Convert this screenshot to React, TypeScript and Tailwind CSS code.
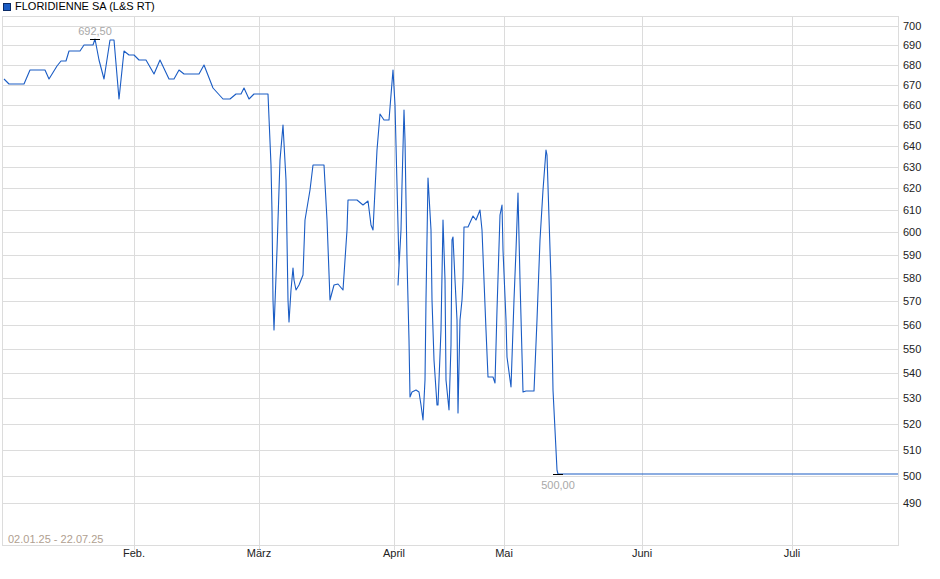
const pts: [number, number][] = [
[4,79],[9,84],[24,84],[30,70],[45,70],[49,79],[57,66],[61,61],[66,61],[69,51],[80,51],[84,45],[93,45],[95,39],[99,60],[104,79],[110,40],[114,40],[119,99],[124,51],[129,55],[134,55],[139,60],[146,60],[154,74],[160,60],[169,79],[174,79],[179,70],[184,74],[199,74],[204,65],[213,88],[223,99],[230,99],[236,94],[241,94],[244,88],[249,99],[254,94],[268,94],
[269,118],[271,165],[272,212],[273,300],[274,330],[277,250],[280,160],[283,125],[286,180],[288,300],[289,322],[291,290],[293,268],[294,280],[296,290],[299,285],[303,275],[305,220],[310,190],[313,165],[324,165],[327,220],[330,300],[334,285],[338,284],[343,290],[347,230],[348,200],[357,200],[363,205],[368,201],[371,225],[373,230],[377,150],[380,114],[384,120],[389,120],[393,70],
[395,105],[397,185],[399,265],[398,285],[401,230],[402,185],[404,110],[405,140],[407,260],[408,300],[409,340],[410,397],[412,392],[416,390],[419,392],[421,405],[423,420],[425,380],[426,300],[428,178],[431,230],[432,300],[434,360],[437,405],[438,405],[441,330],[443,220],[445,280],[446,380],[449,410],[451,345],[452,240],[453,237],[455,280],[457,320],[458,413],[460,320],[462,300],[463,280],[464,227],[468,227],[473,216],[476,220],[480,210],[482,230],[486,330],[488,377],[493,377],[495,383],[497,310],[500,215],[502,205],[503,250],[506,320],[507,357],[511,387],[514,300],[516,250],[518,193],[520,280],[522,355],[523,392],[526,391],[534,391],[537,320],[540,240],[543,190],[546,150],[547,155],[551,280],[553,390],[555,430],[557,470],[558,474],[898,474]];

const yOf = (v: number) => 26 + 1338 * Math.log(700 / v);
const ticks = [700,690,680,670,660,650,640,630,620,610,600,590,580,570,560,550,540,530,520,510,500,490];
const months: [string, number][] = [["Feb.",134],["März",259],["April",394],["Mai",504],["Juni",642],["Juli",792]];

export default function App() {
  return (
    <div className="w-[940px] h-[579px] bg-white relative" style={{ fontFamily: '"Liberation Sans", Arial, sans-serif' }}>
      <div className="flex items-center gap-[4px] pl-[3px] h-[13px] text-[11px] text-black leading-none">
        <span className="w-[8px] h-[8px] bg-[#1a5cc4] border border-[#0a2a66]" />
        <span>FLORIDIENNE SA (L&amp;S RT)</span>
      </div>
      <svg width="940" height="566" viewBox="0 13 940 566" className="block">
        {ticks.map(t => (
          <g key={t}>
            <line x1={2} x2={898} y1={Math.round(yOf(t)) + 0.5} y2={Math.round(yOf(t)) + 0.5} stroke="#dcdcdc" />
            <text x={903} y={Math.round(yOf(t)) + 4} fontSize="11" fill="#222">{t}</text>
          </g>
        ))}
        {months.map(([m, x]) => (
          <g key={m}>
            <line x1={x + 0.5} x2={x + 0.5} y1={16} y2={550} stroke="#dcdcdc" />
            <text x={x} y={557} fontSize="11" fill="#222" textAnchor="middle">{m}</text>
          </g>
        ))}
        <rect x={2.5} y={16.5} width={896} height={529} fill="none" stroke="#dcdcdc" />
        <text x={8} y={543} fontSize="11" fill="#b0a090">02.01.25 - 22.07.25</text>
        <polyline points={pts.map(p => p.join(",")).join(" ")} fill="none" stroke="#1a5cc4" strokeWidth="1.1" strokeLinejoin="round" />
        <line x1={90} x2={100} y1={39.5} y2={39.5} stroke="#000" />
        <text x={95} y={35} fontSize="11" fill="#a8a8a8" textAnchor="middle">692,50</text>
        <line x1={553} x2={563} y1={474.5} y2={474.5} stroke="#000" />
        <text x={558} y={489} fontSize="11" fill="#a8a8a8" textAnchor="middle">500,00</text>
      </svg>
    </div>
  );
}
